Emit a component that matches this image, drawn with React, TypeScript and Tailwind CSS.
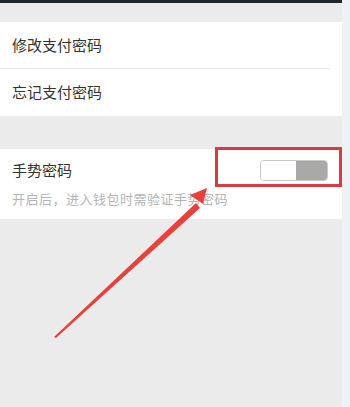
export default function App() {
  return (
    <div
      className="relative flex h-[407px] w-[350px] overflow-hidden bg-[#eef1f6]"
      style={{ fontFamily: '"Noto Sans CJK SC", "Noto Sans", sans-serif' }}
    >
      <div className="flex w-[342px] flex-col bg-[#ebebeb]">
        <div className="h-[3px] bg-[#1e262d]" />
        <div className="mt-[19px] bg-white">
          <div className="flex h-[46px] items-center pl-3 text-[15px] text-[#333]">修改支付密码</div>
          <div className="mr-[12px] h-px bg-[#e6e6e6]" />
          <div className="flex h-[47px] items-center pl-3 text-[15px] text-[#333]">忘记支付密码</div>
        </div>
        <div className="mt-[33px] flex h-[70px] flex-col bg-white px-3">
          <div className="flex h-[42px] items-center justify-between">
            <span className="text-[15px] text-[#333]">手势密码</span>
            <div className="mr-[2px] flex h-[21px] w-[68px] overflow-hidden rounded-[4px] border border-[#c9c9c9]">
              <div className="w-[35px] bg-white" />
              <div className="flex-1 bg-[#a9aaa8]" />
            </div>
          </div>
          <div className="text-[13px] leading-[16px] tracking-[0.5px] text-[#b4b4b4]">开启后，进入钱包时需验证手势密码</div>
        </div>
      </div>
      <div className="w-[8px]" />

      <div className="pointer-events-none absolute left-[215px] top-[147px] h-[40px] w-[127px] border-[3px] border-[#d63b40]" />
      <svg className="pointer-events-none absolute left-0 top-0" width="350" height="407" viewBox="0 0 350 407">
        <polygon points="54,337 196,203 200,208 56,338" fill="#e8413c" />
        <polygon points="207,188 190,195 203,204" fill="#e8413c" />
      </svg>
    </div>
  );
}
